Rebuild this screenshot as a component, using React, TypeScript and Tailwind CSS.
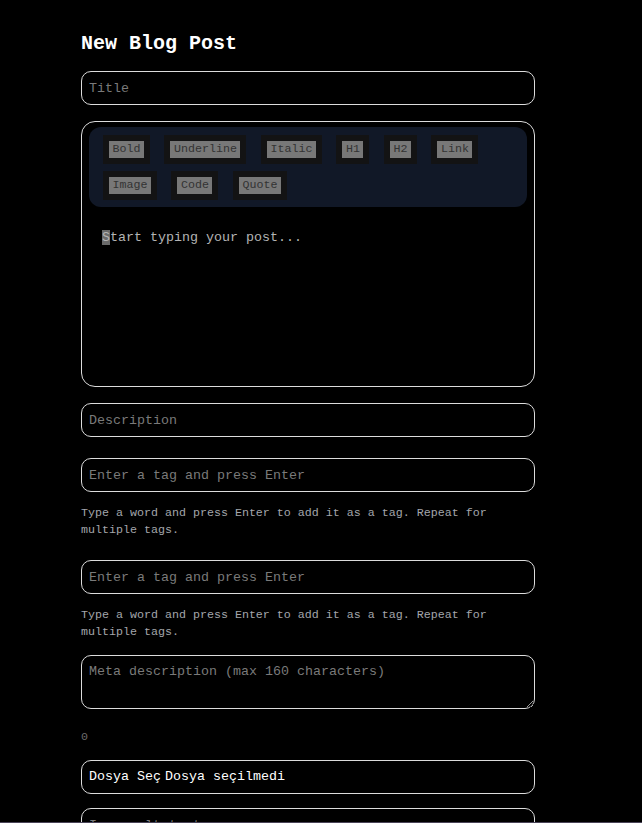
import React from "react";

const mono = { fontFamily: '"Liberation Mono", "DejaVu Sans Mono", monospace' };

const tools1 = ["Bold", "Underline", "Italic", "H1", "H2", "Link", "Image", "Code", "Quote"];

function Field({ placeholder, className = "" }: { placeholder: string; className?: string }) {
  return (
    <input
      placeholder={placeholder}
      className={
        "block w-full h-[34px] rounded-[10px] border border-[#dcdcdc] bg-black px-[7px] text-[13.33px] text-white placeholder:text-[#7a7a7a] outline-none " +
        className
      }
    />
  );
}

export default function App() {
  return (
    <div className="min-h-screen bg-black text-white" style={mono}>
      <div className="ml-[81px] w-[454px] pt-[30px] pb-10">
        <h1 className="text-[20px] leading-[28px] font-bold text-white mb-[13px]">New Blog Post</h1>
        <Field placeholder="Title" />

        <div className="mt-[16px] h-[266px] rounded-[14px] border border-[#dcdcdc] pt-[5px] px-[7px]">
          <div className="rounded-[12px] bg-[#111827] pl-[14px] pr-[8px] pt-[8px] pb-[7px] flex flex-wrap gap-x-[14.5px] gap-y-[7px]">
            {tools1.map((t) => (
              <div key={t} className="bg-[#131314] px-[6px] py-[6px]">
                <span className="block bg-[#787878] text-[#333333] text-[11.67px] leading-[17px] px-[3.5px]">{t}</span>
              </div>
            ))}
          </div>
          <div className="pl-[13px] pt-[22px] text-[13.33px] leading-[17px] text-[#b4b4b4]">
            <span className="bg-[#6a6a6a]">S</span>tart typing your post...
          </div>
        </div>

        <Field placeholder="Description" className="mt-[16px]" />

        <Field placeholder="Enter a tag and press Enter" className="mt-[21px]" />
        <p className="mt-[12.5px] text-[11.67px] leading-[17px] text-[#a3a6ab]">
          Type a word and press Enter to add it as a tag. Repeat for multiple tags.
        </p>

        <Field placeholder="Enter a tag and press Enter" className="mt-[21.5px]" />
        <p className="mt-[12.5px] text-[11.67px] leading-[17px] text-[#a3a6ab]">
          Type a word and press Enter to add it as a tag. Repeat for multiple tags.
        </p>

        <textarea
          placeholder="Meta description (max 160 characters)"
          className="mt-[14.5px] block w-full h-[54px] rounded-[10px] border border-[#dcdcdc] bg-black px-[7px] pt-[7px] text-[13.33px] leading-[17px] text-white placeholder:text-[#7a7a7a] outline-none resize-y"
        />
        <p className="mt-[19.5px] text-[11.67px] leading-[17px] text-[#6b6b6b]">0</p>

        <div className="mt-[14.5px] h-[34px] rounded-[10px] border border-[#dcdcdc] px-[7px] flex items-center text-[13.33px] text-white">
          <span>Dosya Seç</span>
          <span className="ml-[4px]">Dosya seçilmedi</span>
        </div>

        <Field placeholder="Image alt text" className="mt-[14px]" />
        <Field placeholder="Canonical URL" className="mt-[16px]" />
      </div>
      <div className="fixed bottom-0 left-0 right-0 h-px bg-[#4a4458]" />
    </div>
  );
}
